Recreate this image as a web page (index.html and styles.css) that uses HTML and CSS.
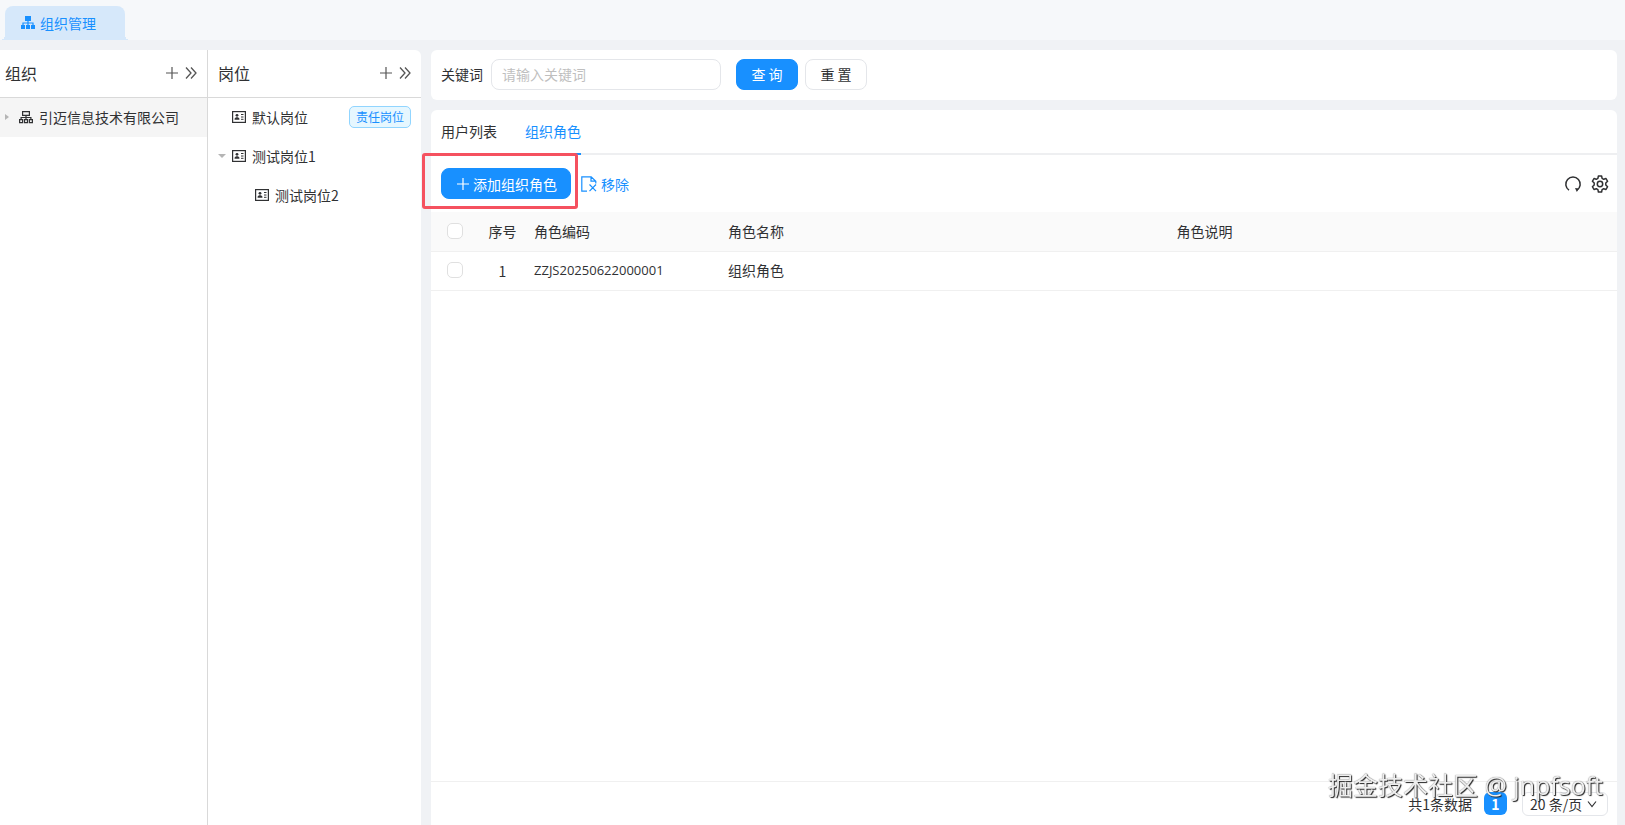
FILE: index.html
```html
<!DOCTYPE html>
<html lang="zh-CN">

<head>
    <meta charset="UTF-8">
    <meta name="viewport" content="width=device-width, initial-scale=1.0">
    <title>组织管理</title>
    <link rel="stylesheet" href="styles.css">
</head>

<body>

    <svg class="sprite" aria-hidden="true">
        <symbol id="icon-plus" viewBox="0 0 14 14">
            <path d="M7 1v12M1 7h12" fill="none" stroke="currentColor" stroke-width="1.2" />
        </symbol>
        <symbol id="icon-double" viewBox="0 0 12 12">
            <path d="M1 .5l5 5.5-5 5.500M6 .5L11 6l-5 5.500" fill="none" stroke="currentColor" stroke-width="1.3" />
        </symbol>
        <symbol id="icon-card" viewBox="0 0 14 12">
            <rect x=".6" y=".6" width="12.800" height="10.800" fill="none" stroke="currentColor" stroke-width="1.2" />
            <circle cx="5" cy="4.300" r="1.400" fill="currentColor" />
            <path d="M2.600 8.700V7.500L4 6.200h2l1.400 1.300v1.200z" fill="currentColor" />
            <path d="M9 3.500h2.500M9 6h2.500M9 8.300h2.500" stroke="currentColor" stroke-width="1" />
        </symbol>
    </svg>

    <header class="tabbar">
        <a class="page-tab" href="#">
            <svg width="14" height="14" viewBox="0 0 14 14" aria-hidden="true">
                <path d="M4 0h6v5H4zM0 9h4v4H0zM5 9h4v4H5zM10 9h4v4h-4z" fill="currentColor" />
                <path d="M7 5v4M2 9V7h10v2" fill="none" stroke="currentColor" stroke-width="1.2" />
            </svg>
            组织管理
        </a>
    </header>

    <div class="layout">
        <aside class="side org">
            <div class="side-header">
                <h2>组织</h2>
                <button type="button" aria-label="新增组织"><svg width="14" height="14"><use href="#icon-plus" /></svg></button>
                <button type="button" aria-label="展开"><svg width="12" height="12"><use href="#icon-double" /></svg></button>
            </div>
            <ul class="tree">
                <li class="node selected">
                    <span class="caret right"></span>
                    <svg width="14" height="14" viewBox="0 0 14 14" fill="none" stroke="currentColor" stroke-width="1.2" aria-hidden="true">
                        <path d="M3.600 1.600h6.800v3.800H3.600zM.6 9.600h3v3h-3zM5.500 9.600h3v3h-3zM10.400 9.600h3v3h-3zM7 5.400v4.200M2.100 9.600V7.500h9.800v2.100" />
                    </svg>
                    引迈信息技术有限公司
                </li>
            </ul>
        </aside>

        <aside class="side post">
            <div class="side-header">
                <h2>岗位</h2>
                <button type="button" aria-label="新增岗位"><svg width="14" height="14"><use href="#icon-plus" /></svg></button>
                <button type="button" aria-label="展开"><svg width="12" height="12"><use href="#icon-double" /></svg></button>
            </div>
            <ul class="tree">
                <li class="node">
                    <span class="caret"></span>
                    <svg width="14" height="12"><use href="#icon-card" /></svg>
                    默认岗位
                    <span class="tag">责任岗位</span>
                </li>
                <li class="node">
                    <span class="caret down"></span>
                    <svg width="14" height="12"><use href="#icon-card" /></svg>
                    测试岗位1
                </li>
                <li class="node child">
                    <span class="caret"></span>
                    <svg width="14" height="12"><use href="#icon-card" /></svg>
                    测试岗位2
                </li>
            </ul>
        </aside>

        <main class="main">
            <form class="panel search">
                <label for="keyword">关键词</label>
                <input type="text" id="keyword" placeholder="请输入关键词" autocomplete="off">
                <button type="button" class="btn primary">查 询</button>
                <button type="button" class="btn">重 置</button>
            </form>

            <section class="panel content">
                <nav class="tabs">
                    <a href="#">用户列表</a>
                    <a href="#" class="active">组织角色</a>
                </nav>

                <div class="toolbar">
                    <div class="add-wrap">
                        <button type="button" class="btn primary add"><svg width="14" height="14"><use href="#icon-plus" /></svg>添加组织角色</button>
                    </div>
                    <button type="button" class="link-btn">
                        <svg width="16" height="16" viewBox="0 0 16 16" fill="none" stroke="currentColor" stroke-width="1.200" aria-hidden="true">
                            <path d="M6 15.200H.8V.8h9.400l4.600 4.400v2.300M10 .8v4.400h4.800M8.500 8.500l6.500 6.700M15 8.500l-6.500 6.700" />
                        </svg>移除
                    </button>
                    <div class="tools">
                        <button type="button" aria-label="刷新">
                            <svg width="18" height="18" viewBox="0 0 18 18" aria-hidden="true">
                                <path d="M5 15.200A7.200 7.200 0 1 1 13 15.200" fill="none" stroke="currentColor" stroke-width="1.500" />
                                <path d="M11 13l4 .6-2.200 3.400z" fill="currentColor" />
                            </svg>
                        </button>
                        <button type="button" aria-label="列设置">
                            <svg width="18" height="18" viewBox="0 0 18 18" fill="none" stroke="currentColor" stroke-width="1.500" stroke-linejoin="round" aria-hidden="true">
                                <path d="M7.400 1h3.200l.5 2.400 1.600.9 2.300-.8 1.600 2.800L14.800 8v2l1.800 1.700-1.600 2.800-2.300-.8-1.600.9-.5 2.400H7.400l-.5-2.400-1.600-.9-2.300.8-1.600-2.800L3.200 10V8L1.400 6.300 3 3.500l2.300.8 1.600-.9z" />
                                <circle cx="9" cy="9" r="2.700" />
                            </svg>
                        </button>
                    </div>
                </div>

                <table class="grid">
                    <thead>
                        <tr>
                            <th class="col-check"><input type="checkbox" aria-label="全选"></th>
                            <th class="col-index">序号</th>
                            <th class="col-code">角色编码</th>
                            <th>角色名称</th>
                            <th>角色说明</th>
                        </tr>
                    </thead>
                    <tbody>
                        <tr>
                            <td class="col-check"><input type="checkbox" aria-label="选择组织角色"></td>
                            <td class="col-index">1</td>
                            <td class="col-code">ZZJS20250622000001</td>
                            <td>组织角色</td>
                            <td></td>
                        </tr>
                    </tbody>
                </table>

                <footer class="pager">
                    <span>共1条数据</span>
                    <button type="button" class="page">1</button>
                    <div class="page-size">
                        <select aria-label="每页条数">
                            <option>20 条/页</option>
                        </select>
                        <svg width="10" height="8" viewBox="0 0 10 8" aria-hidden="true">
                            <path d="M1 1.500l4 5 4-5" fill="none" stroke="currentColor" stroke-width="1.200" />
                        </svg>
                    </div>
                </footer>
            </section>
        </main>
    </div>

    <div class="watermark">掘金技术社区 @ jnpfsoft</div>

</body>

</html>
```

FILE: styles.css
```css
* {
    box-sizing: border-box;
}

body {
    display: flex;
    flex-direction: column;
    height: 100vh;
    margin: 0;
    overflow: hidden;
    background-color: #f0f2f5;
    color: #303133;
    font: 14px/22px "Noto Sans CJK SC", sans-serif;
}

button,
input,
select {
    color: inherit;
    font: inherit;
}

button {
    padding: 0;
    border: none;
    background: none;
    cursor: pointer;
}

a {
    color: inherit;
    text-decoration: none;
}

svg {
    display: block;
    flex: none;
}

.sprite {
    position: absolute;
    width: 0;
    height: 0;
}

/* top tabs */
.tabbar {
    display: flex;
    align-items: flex-end;
    flex: none;
    height: 40px;
    padding-left: 5px;
    background-color: #f6f8fa;
}

.page-tab {
    position: relative;
    display: flex;
    align-items: center;
    gap: 5px;
    height: 34px;
    padding: 0 29px 0 16px;
    border-radius: 8px 8px 0 0;
    background-color: #d6e8fa;
    color: #1890ff;
}

/* flared foot of the tab */
.page-tab::before,
.page-tab::after {
    content: "";
    position: absolute;
    bottom: 0;
    width: 5px;
    height: 5px;
}

.page-tab::before {
    right: 100%;
    background: radial-gradient(circle at 0 0, transparent 5px, #d6e8fa 5px);
}

.page-tab::after {
    left: 100%;
    background: radial-gradient(circle at 100% 0, transparent 5px, #d6e8fa 5px);
}

.layout {
    display: flex;
    flex: 1;
    min-height: 0;
    padding: 10px 8px 0 0;
}

/* side trees */
.side {
    flex: none;
    background-color: #fff;
}

.org {
    width: 208px;
    border-right: 1px solid #d9d9d9;
}

.post {
    width: 213px;
    margin-right: 10px;
    border-radius: 0 6px 0 0;
}

.side-header {
    display: flex;
    align-items: center;
    gap: 6px;
    height: 48px;
    padding: 0 10px 2px 5px;
    border-bottom: 1px solid #d9d9d9;
    color: #555;
}

.post .side-header,
.post .node {
    padding-left: 10px;
}

.side-header h2 {
    flex: 1;
    margin: 0;
    color: #303133;
    font-size: 16px;
    font-weight: 400;
}

.tree {
    margin: 0;
    padding: 0;
    list-style: none;
}

.node {
    display: flex;
    align-items: center;
    gap: 6px;
    height: 39px;
    padding: 0 10px 2px 5px;
}

.selected {
    background-color: #f5f5f5;
}

.post .child {
    padding-left: 33px;
}

.caret {
    width: 8px;
    margin-right: 1px;
    color: #b5b5b5;
}

.right {
    width: 4px;
    margin-right: 4px;
    border: solid transparent;
    border-width: 3px 0 3px 4px;
    border-left-color: currentColor;
}

.down {
    border: solid transparent;
    border-width: 4px 4px 0;
    border-top-color: currentColor;
}

.post .caret {
    margin-right: 0;
}

.tag {
    margin-left: auto;
    padding: 0 6px;
    border: 1px solid #91d5ff;
    border-radius: 5px;
    background-color: #e6f7ff;
    color: #1890ff;
    font-size: 12px;
    line-height: 20px;
}

/* right part */
.main {
    display: flex;
    flex: 1;
    flex-direction: column;
    gap: 10px;
    min-width: 0;
}

.panel {
    border-radius: 6px 6px 0 0;
    background-color: #fff;
}

.search {
    display: flex;
    align-items: center;
    height: 50px;
    padding: 0 10px 2px;
    border-radius: 6px;
}

.search input {
    width: 230px;
    height: 31px;
    margin: 0 15px 0 8px;
    padding: 0 10px;
    border: 1px solid #e4e6ea;
    border-radius: 8px;
    outline: none;
}

.search input::placeholder {
    color: #bfbfbf;
}

.btn {
    height: 31px;
    padding: 0 15px;
    border: 1px solid #e4e6ea;
    border-radius: 8px;
    background-color: #fff;
}

.search .btn {
    width: 62px;
    margin-right: 7px;
    padding: 0;
}

.btn.primary {
    border-color: #1890ff;
    background-color: #1890ff;
    color: #fff;
}

.content {
    display: flex;
    flex: 1;
    flex-direction: column;
}

.tabs {
    display: flex;
    gap: 28px;
    height: 45px;
    padding: 0 10px;
    border-bottom: 2px solid #eeeff1;
    line-height: 42px;
}

.tabs a {
    height: 45px;
}

.active {
    border-bottom: 2px solid #1890ff;
    color: #1890ff;
}

.toolbar {
    display: flex;
    align-items: center;
    height: 57px;
    padding: 0 8px 0 10px;
}

.add-wrap {
    position: relative;
}

/* highlight frame around the add button */
.add-wrap::after {
    content: "";
    position: absolute;
    inset: -15px -7px -10px -19px;
    border: 3px solid #f5515f;
    border-radius: 3px;
    pointer-events: none;
}

.btn.add {
    display: flex;
    align-items: center;
    gap: 3px;
    padding: 0 13px 0 14px;
}

.link-btn {
    display: flex;
    align-items: center;
    gap: 4px;
    margin-left: 10px;
    color: #1890ff;
}

.tools {
    display: flex;
    gap: 9px;
    margin-left: auto;
}

.grid {
    width: 100%;
    border-collapse: collapse;
    table-layout: fixed;
}

.grid th,
.grid td {
    height: 39px;
    padding: 0 8px;
    border-bottom: 1px solid #f0f0f0;
    font-weight: 400;
    text-align: left;
}

.grid th {
    background-color: #fafafa;
}

.grid td {
    padding-bottom: 2px;
}

.grid .col-check {
    width: 48px;
    text-align: center;
}

.grid .col-index {
    width: 47px;
    padding: 0;
    text-align: center;
}

.grid .col-code {
    width: 194px;
}

td.col-code {
    font-family: "Open Sans", sans-serif;
    font-size: 13px;
}

.grid input {
    display: block;
    width: 16px;
    height: 16px;
    margin: 0 auto;
    appearance: none;
    border: 1px solid #e0e0e0;
    border-radius: 5px;
    background-color: #fff;
}

.pager {
    display: flex;
    align-items: center;
    justify-content: flex-end;
    height: 44px;
    margin-top: auto;
    padding-right: 9px;
    border-top: 1px solid #f0f0f0;
}

.page {
    width: 23px;
    height: 23px;
    margin: 0 15px 0 12px;
    border-radius: 6px;
    background-color: #1890ff;
    color: #fff;
    font-weight: 700;
}

.page-size {
    position: relative;
}

.page-size select {
    width: 86px;
    height: 24px;
    padding: 0 7px;
    appearance: none;
    border: 1px solid #e4e6ea;
    border-radius: 6px;
    background-color: #fff;
    line-height: 22px;
}

.page-size svg {
    position: absolute;
    top: 8px;
    right: 11px;
    pointer-events: none;
}

.watermark {
    position: fixed;
    right: 22px;
    bottom: 20px;
    color: #eee;
    font-family: "Open Sans", "Noto Sans CJK SC", sans-serif;
    font-size: 25px;
    line-height: 40px;
    text-shadow: 1px 1px 1px #222, 0 0 1px #666;
    pointer-events: none;
}
```
